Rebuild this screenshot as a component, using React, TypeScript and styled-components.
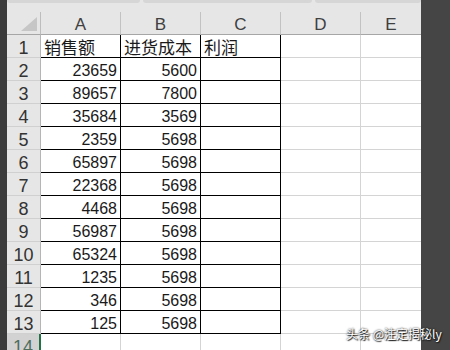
import React from "react";
import styled, { createGlobalStyle } from "styled-components";

const GlobalStyle = createGlobalStyle`
  html, body { margin: 0; padding: 0; background: #454545; }
  body { font-family: "Liberation Sans", "Noto Sans CJK SC", sans-serif; }
  * { box-sizing: border-box; }
`;

const Frame = styled.div`
  position: relative;
  display: flex;
  width: 450px;
  height: 350px;
  overflow: hidden;
`;

const LeftBar = styled.div`
  width: 7px;
  flex: none;
  background: #3b3b3b;
`;

const RightBar = styled.div`
  flex: 1;
  background: #454545;
`;

const SheetArea = styled.div`
  width: 414px;
  flex: none;
  display: flex;
  flex-direction: column;
  background: #e6e6e6;
`;

const TopBand = styled.div`
  height: 12px;
  flex: none;
  display: flex;
  gap: 3px;
  align-items: flex-start;
`;

const BandPiece = styled.div<{ $w: number }>`
  width: ${(p) => p.$w}px;
  flex: none;
  height: 3px;
  background: #d6d6d6;
  border-radius: 0 0 3px 3px;
`;

const Grid = styled.div`
  display: grid;
  grid-template-columns: 34px repeat(4, 80px) 60px;
  grid-auto-rows: 23px;
  background: #ffffff;
`;

const Corner = styled.div`
  background: #e6e6e6;
  border-right: 1px solid #bdbdbd;
  border-bottom: 1px solid #a6a6a6;
  display: flex;
  align-items: flex-end;
  justify-content: flex-end;
  padding: 0 3px 3px 0;
`;

const ColHeader = styled.div<{ $last?: boolean }>`
  background: #e6e6e6;
  border-right: ${(p) => (p.$last ? "none" : "1px solid #c2c2c2")};
  border-bottom: 1px solid #a6a6a6;
  display: flex;
  align-items: center;
  justify-content: center;
  padding-top: 4px;
  font-size: 17px;
  color: #404040;
`;

const RowHeader = styled.div<{ $active?: boolean }>`
  background: ${(p) => (p.$active ? "#d2d2d2" : "#e6e6e6")};
  border-right: ${(p) => (p.$active ? "2px solid #217346" : "1px solid #b5b5b5")};
  border-bottom: 1px solid #d0d0d0;
  display: flex;
  align-items: center;
  justify-content: center;
  padding-top: 4px;
  font-size: 18px;
  color: ${(p) => (p.$active ? "#4f6f5c" : "#333333")};
`;

const Cell = styled.div<{ $boxed?: boolean; $num?: boolean; $last?: boolean }>`
  background: #ffffff;
  border-right: ${(p) =>
    p.$last ? "none" : p.$boxed ? "1px solid #000000" : "1px solid #d4d4d4"};
  border-bottom: 1px solid ${(p) => (p.$boxed ? "#000000" : "#d4d4d4")};
  display: flex;
  align-items: center;
  justify-content: ${(p) => (p.$num ? "flex-end" : "flex-start")};
  padding: ${(p) => (p.$num ? "3px 3px 0 0" : "1px 0 0 3px")};
  font-size: ${(p) => (p.$num ? "16px" : "17px")};
  color: #1a1a1a;
  white-space: nowrap;
  overflow: hidden;
`;

const Watermark = styled.div`
  position: absolute;
  left: 346px;
  top: 325px;
  font-family: "Noto Sans CJK SC", "Liberation Sans", sans-serif;
  font-size: 12px;
  color: #ffffff;
  text-shadow: 0 0 2px #000, 1px 1px 1px #222;
  white-space: nowrap;
`;

const cols = ["A", "B", "C", "D", "E"];

const data: (string | number)[][] = [
  ["销售额", "进货成本", "利润"],
  [23659, 5600],
  [89657, 7800],
  [35684, 3569],
  [2359, 5698],
  [65897, 5698],
  [22368, 5698],
  [4468, 5698],
  [56987, 5698],
  [65324, 5698],
  [1235, 5698],
  [346, 5698],
  [125, 5698],
];

export default function App() {
  const rows = [...data, [], []];
  return (
    <>
      <GlobalStyle />
      <Frame>
        <LeftBar />
        <SheetArea>
          <TopBand>
            <BandPiece $w={133} />
            <BandPiece $w={169} />
            <BandPiece $w={106} />
          </TopBand>
          <Grid>
            <Corner>
              <svg width="16" height="14" viewBox="0 0 16 14">
                <polygon points="0,14 16,0 16,14" fill="#c6c6c6" />
              </svg>
            </Corner>
            {cols.map((c, i) => (
              <ColHeader key={c} $last={i === cols.length - 1}>
                {c}
              </ColHeader>
            ))}
            {rows.map((r, ri) => {
              const inData = ri < data.length;
              return (
                <React.Fragment key={ri}>
                  <RowHeader $active={ri === 13}>{ri + 1}</RowHeader>
                  {cols.map((c, ci) => {
                    const v = r[ci];
                    const boxed = inData && ci < 3;
                    return (
                      <Cell
                        key={c}
                        $boxed={boxed}
                        $num={typeof v === "number"}
                        $last={ci === cols.length - 1}
                      >
                        {v ?? ""}
                      </Cell>
                    );
                  })}
                </React.Fragment>
              );
            })}
          </Grid>
        </SheetArea>
        <RightBar />
        <Watermark>头条 @注定揭秘ly</Watermark>
      </Frame>
    </>
  );
}
